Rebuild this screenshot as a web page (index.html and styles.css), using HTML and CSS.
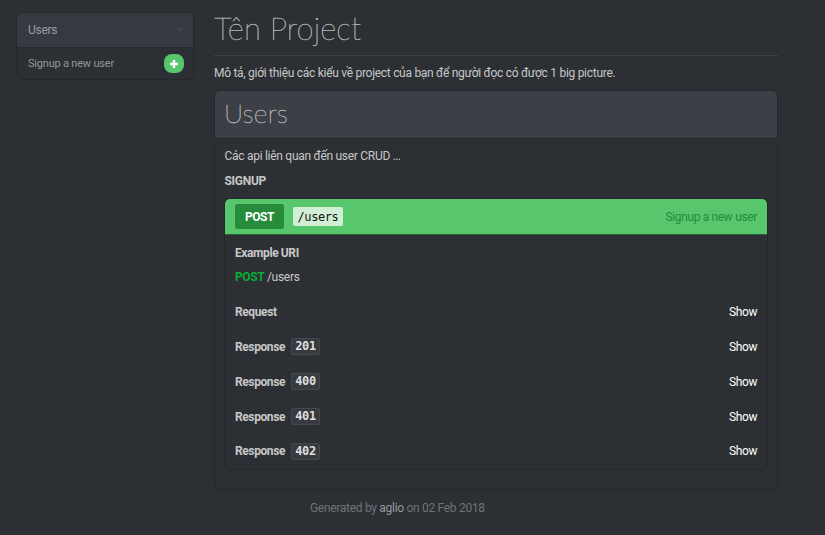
FILE: index.html
```html
<!DOCTYPE html>
<html lang="vi">
<head>
<meta charset="utf-8">
<title>Tên Project</title>
<link rel="stylesheet" href="styles.css">
</head>
<body>
<div class="layout">
  <nav class="sidebar">
    <div class="nav-heading"><span>Users</span>
      <svg class="chevron" width="7" height="5" viewBox="0 0 7 5"><path d="M.5 .8 3.5 3.8 6.5 .8"/></svg>
    </div>
    <a class="nav-item"><span>Signup a new user</span>
      <span class="plus"><svg width="8" height="8" viewBox="0 0 8 8"><path d="M4 0v8M0 4h8"/></svg></span>
    </a>
  </nav>
  <main class="content">
    <h1><span class="title">Tên Project</span></h1>
    <p class="intro"><span>Mô tả, giới thiệu các kiểu về project của bạn để người đọc có được 1 big picture.</span></p>
    <section class="panel">
      <h2><span class="group">Users</span></h2>
      <p class="description">Các api liên quan đến user CRUD …</p>
      <h3>SIGNUP</h3>
      <div class="action">
        <div class="action-heading"><span class="method">POST</span><code class="uri">/users</code><span class="name">Signup a new user</span></div>
        <div class="row example"><strong>Example URI</strong></div>
        <div class="definition"><span class="verb">POST</span> /users</div>
        <div class="row"><strong>Request</strong><span class="show">Show</span></div>
        <div class="row"><strong>Response</strong><code>201</code><span class="show">Show</span></div>
        <div class="row"><strong>Response</strong><code>400</code><span class="show">Show</span></div>
        <div class="row"><strong>Response</strong><code>401</code><span class="show">Show</span></div>
        <div class="row"><strong>Response</strong><code>402</code><span class="show">Show</span></div>
      </div>
    </section>
    <footer>Generated by <a>aglio</a> on 02 Feb 2018</footer>
  </main>
</div>
</body>
</html>
```
FILE: styles.css
```css
* { box-sizing: border-box; }
body { margin: 0; height: 535px; overflow: hidden; background: #2c2f33; color: #c8c8c8; font: 12px/20px Roboto, sans-serif; letter-spacing: -.285px; }
h1, h2, h3, p { margin: 0; }
.layout { display: flex; align-items: flex-start; gap: 20px; padding: 12px 0 0 16px; }
.sidebar { width: 178px; height: 68px; border: 1px solid #26292b; border-radius: 6px; overflow: hidden; }
.nav-heading { height: 35px; padding: 0 10px 1px 11px; display: flex; align-items: center; justify-content: space-between; background: #363a40; border-bottom: 1px solid #26292b; color: #999c9f; }
.chevron { fill: none; stroke: #515559; }
.nav-item { display: flex; height: 31px; padding: 0 9px 0 11px; align-items: center; justify-content: space-between; color: #94979a; font-size: 11px; letter-spacing: -.2px; }
.plus { display: flex; width: 20px; height: 19px; align-items: center; justify-content: center; border-radius: 8px; background: #57c66c; }
.plus path { stroke: #fff; stroke-width: 2.4; }
.content { width: 564px; }
h1, h2 { font-family: Lato, sans-serif; font-weight: 100; letter-spacing: 0; -webkit-text-stroke: .4px #b8b8b8; }
h1 { height: 44px; border-bottom: 1px solid #3d4145; font-size: 31px; line-height: 33px; letter-spacing: .1px; }
h2 { height: 48px; padding: 0 9px; background: #3c3f46; border-bottom: 1px solid #232629; border-radius: 5px 5px 0 0; font-size: 26.5px; line-height: 45px; letter-spacing: .2px; }
.intro { padding-top: 7px; height: 34px; }
.panel { height: 400px; border: 1px solid #26292b; border-radius: 6px; }
.description { padding: 7px 9.5px 0; }
h3 { padding: 5px 9.5px 0; font-size: 12px; line-height: 20px; font-weight: 700; }
.action { margin: 7px 9px 0; height: 272px; border: 1px solid #26292b; border-radius: 6px; }
.action-heading { height: 36px; padding: 0 10px; display: flex; align-items: center; background: #57c66c; border-bottom: 1px solid #2c6338; border-radius: 5px 5px 0 0; }
.method { width: 49px; height: 25px; border-radius: 2px; background: #278b3c; color: #fff; text-align: center; font-weight: 700; line-height: 26px; letter-spacing: -.4px; }
strong, .verb { letter-spacing: -.4px; }
code { font-family: "DejaVu Sans Mono", monospace; }
.uri { margin-left: 9px; height: 19px; padding: 0 4.5px; border-radius: 2px; background: #d0efd5; color: #111; font-size: 12px; letter-spacing: -.4px; line-height: 20px; }
.name { margin-left: auto; color: #278b3c; letter-spacing: -.35px; }
.row { height: 34.8px; padding: 0 10px; display: flex; align-items: center; }
.row.example { padding-top: 1px; }
.row code { margin-left: 6px; width: 29px; height: 17px; border: 1px solid #44494d; border-radius: 2px; background: #373b40; color: #dedede; text-align: center; font-size: 12px; letter-spacing: -.3px; line-height: 15px; font-weight: 700; }
.show { margin-left: auto; color: #fff; letter-spacing: -.4px; }
.definition { padding: 0 10px; height: 25px; line-height: 15px; }
.verb { color: #0aad35; font-weight: 700; }
footer { padding-top: 8px; color: #707376; padding-left: 96px; letter-spacing: -.3px; }
footer a { color: #96999b; }
```
